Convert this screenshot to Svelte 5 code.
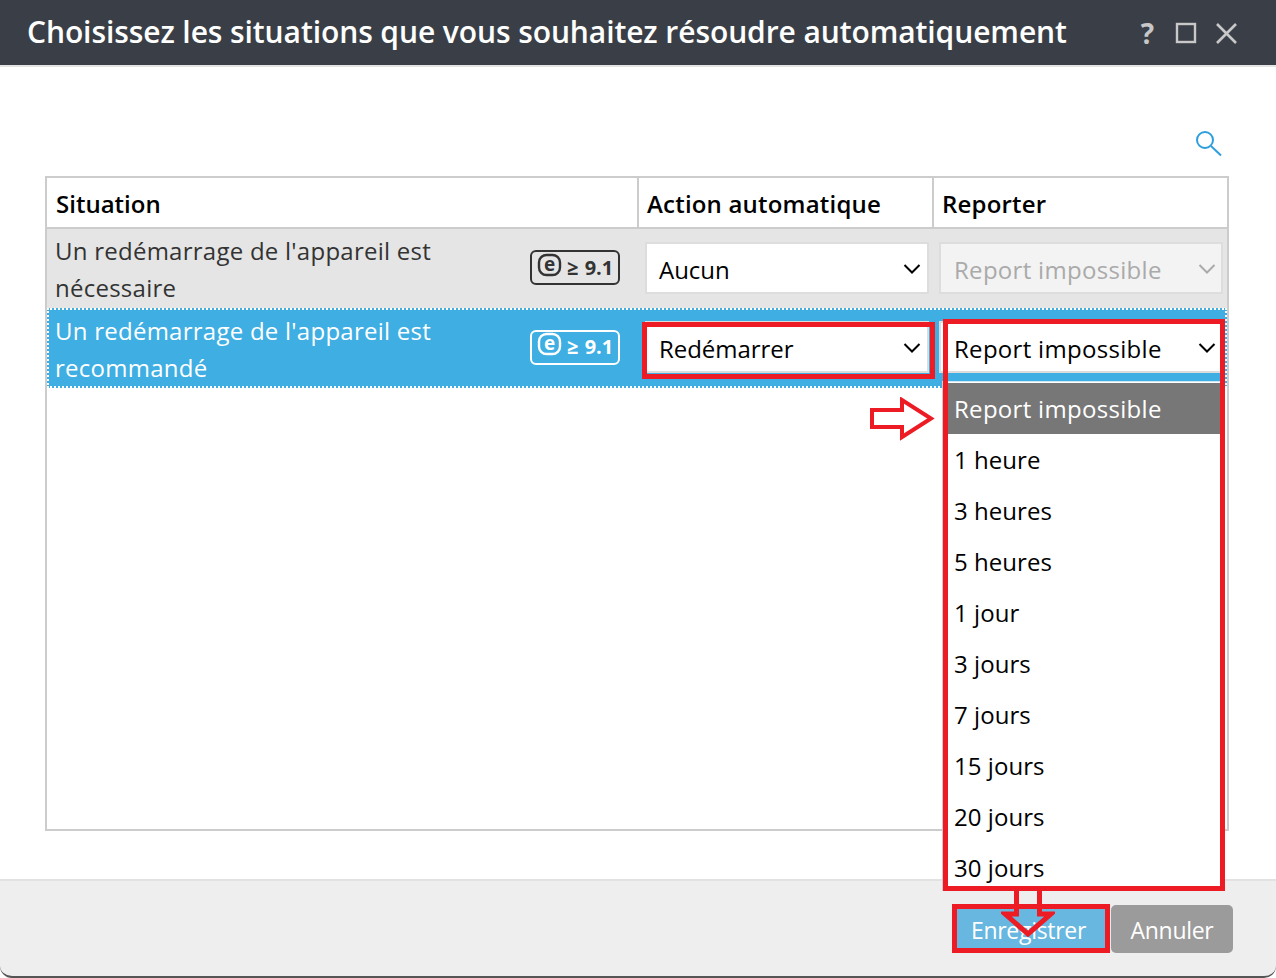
<script>
  const options = ['Report impossible','1 heure','3 heures','5 heures','1 jour','3 jours','7 jours','15 jours','20 jours','30 jours'];
</script>

{#snippet chevron()}
  <svg class="chev" width="18" height="12" viewBox="0 0 18 12"><path d="M1.5 2 L9 9.5 L16.5 2" fill="none" stroke="currentColor" stroke-width="2"/></svg>
{/snippet}

{#snippet badge()}
  <span class="badge">
    <svg width="26" height="24" viewBox="0 0 26 24"><rect x="2" y="2" width="21" height="20" rx="7.5" fill="none" stroke="currentColor" stroke-width="2.4"/><text x="12.5" y="18" text-anchor="middle" class="e">e</text></svg>
    <b>≥ 9.1</b>
  </span>
{/snippet}

<div class="dialog">
  <header class="titlebar">
    <h1>Choisissez les situations que vous souhaitez résoudre automatiquement</h1>
    <div class="tools">
      <span class="help">?</span>
      <svg width="22" height="22" viewBox="0 0 22 22"><rect x="2" y="2" width="18" height="18" fill="none" stroke="#c8c8c8" stroke-width="2.4"/></svg>
      <svg width="24" height="24" viewBox="0 0 24 24"><path d="M3 3 L22 22 M22 3 L3 22" fill="none" stroke="#c8c8c8" stroke-width="2.6"/></svg>
    </div>
  </header>

  <main class="body">
    <div class="searchline">
      <svg width="30" height="30" viewBox="0 0 30 30"><circle cx="12" cy="12" r="8" fill="none" stroke="#2f9fdc" stroke-width="2"/><path d="M18 18 L28 27.5" stroke="#2f9fdc" stroke-width="2" fill="none"/></svg>
    </div>
    <div class="table">
      <div class="row head">
        <div class="c1">Situation</div>
        <div class="c2">Action automatique</div>
        <div class="c3">Reporter</div>
      </div>
      <div class="row item grey">
        <div class="c1"><span class="name">Un redémarrage de l'appareil est nécessaire</span>{@render badge()}</div>
        <div class="c2"><div class="select">Aucun{@render chevron()}</div></div>
        <div class="c3"><div class="select off rp">Report impossible{@render chevron()}</div></div>
      </div>
      <div class="row item sel">
        <div class="c1"><span class="name">Un redémarrage de l'appareil est recommandé</span>{@render badge()}</div>
        <div class="c2"><div class="select">Redémarrer{@render chevron()}</div></div>
        <div class="c3"><div class="select rp">Report impossible{@render chevron()}</div></div>
      </div>
    </div>
  </main>

  <footer class="foot">
    <button class="save">Enregistrer</button>
    <button class="cancel">Annuler</button>
  </footer>

  <ul class="menu">
    {#each options as o, i}
      <li class:active={i === 0}>{o}</li>
    {/each}
  </ul>

  <div class="mark m1"></div>
  <div class="mark m2"></div>
  <div class="mark m3"></div>
  <svg class="arrow a1" width="66" height="44" viewBox="0 0 66 44"><path d="M3 13 H33 V3 L62 21.5 L33 40 V30 H3 Z" fill="#fff" stroke="#ed1c24" stroke-width="4"/></svg>
  <svg class="arrow a2" width="54" height="48" viewBox="0 0 54 48"><path d="M15.5 0 V25 H4 L27 45 L50 25 H38.5 V0" fill="none" stroke="#ed1c24" stroke-width="5"/></svg>
</div>

<style>
  :global(body) { margin: 0; background: #fff; }
  .dialog {
    position: relative; width: 1276px; height: 978px; overflow: hidden; box-sizing: border-box;
    display: flex; flex-direction: column; background: #fff;
    font-family: "Open Sans", "Noto Sans", sans-serif; font-size: 24px; color: #000;
  }
  .titlebar {
    height: 65px; flex: none; box-sizing: border-box; background: #3a3f47;
    display: flex; align-items: center; justify-content: space-between; padding: 0 38px 3px 27px;
    box-shadow: 0 2px 0 #e4e4e4;
  }
  h1 { margin: 0; font-size: 30px; font-weight: 600; color: #fff; letter-spacing: -0.09px; white-space: nowrap; }
  .tools { display: flex; align-items: center; gap: 17px; padding-top: 3px; }
  .help { font-size: 28px; font-weight: 700; color: #c8c8c8; margin-right: 4px; }
  .body { flex: 1; padding: 0 47px 48px 45px; display: flex; flex-direction: column; min-height: 0; }
  .searchline { height: 111px; flex: none; display: flex; justify-content: flex-end; align-items: flex-end; padding-right: 6px; padding-bottom: 18px; box-sizing: border-box; }
  .table { flex: 1; border: 2px solid #ccc; box-sizing: border-box; }
  .row { display: grid; grid-template-columns: 590px 295px 1fr; }
  .head { height: 51px; box-sizing: border-box; border-bottom: 2px solid #ccc; font-weight: 600; letter-spacing: 0.2px; }
  .head > div { padding: 2px 8px 0; display: flex; align-items: center; box-sizing: border-box; }
  .head .c1 { padding-left: 9px; letter-spacing: 0; }
  .head .c2, .head .c3 { border-left: 2px solid #ccc; }
  .item { height: 80px; box-sizing: border-box; line-height: 37px; }
  .item .c1 { display: flex; align-items: center; padding-left: 8px; padding-right: 17px; justify-content: space-between; }
  .name { width: 400px; letter-spacing: 0.25px; }
  .grey { background: #e5e5e5; color: #333; height: 79px; }
  .sel { background: #3eaee3; color: #fff; outline: 2px dotted #fff; outline-offset: -2px; }
  .sel .c1 { padding-top: 2px; }
  .item .c2 { padding: 13px 0 0 8px; }
  .item .c3 { padding: 13px 0 0 7px; }
  .select {
    height: 52px; box-sizing: border-box; border: 2px solid #ddd; background: #fff; color: #000;
    display: flex; align-items: center; justify-content: space-between; padding: 2px 6px 0 12px; letter-spacing: -0.05px;
    width: 284px;
  }
  .rp { letter-spacing: 0.3px; padding-left: 13px; padding-right: 5px; }
  .chev { margin-top: -1px; }
  .off { background: #f3f3f3; color: #aaa; }
  .badge {
    display: inline-flex; align-items: center; gap: 4px; box-sizing: border-box; width: 90px; height: 35px;
    border: 2px solid currentColor; border-radius: 6px; padding-left: 5px; margin-top: -2px; font-size: 20px; white-space: nowrap;
    flex: none; line-height: 1;
  }
  .sel .badge { margin-top: -4px; }
  .badge svg { margin-top: -6px; flex: none; overflow: visible; }
  .badge b { font-family: "Open Sans", sans-serif; font-weight: 700; word-spacing: 1px; }
  .e { font: 700 19px "Open Sans", sans-serif; fill: currentColor; }
  .foot {
    height: 99px; flex: none; box-sizing: border-box; background: #eee; border-top: 2px solid #e2e2e2; border-bottom: 2px solid #555;
    border-radius: 0 0 12px 12px; display: flex; justify-content: flex-end; align-items: flex-start; padding: 24px 43px 0 0; gap: 3px;
  }
  button { font: inherit; font-size: 23px; letter-spacing: -0.3px; color: #fff; border: 0; height: 48px; padding: 2px 0 0; border-radius: 5px; }
  .save { background: #68b7e0; width: 155px; padding-right: 4px; }
  .cancel { background: #9b9b9b; width: 122px; }
  .menu {
    position: absolute; left: 942px; top: 381px; width: 282px; height: 510px; box-sizing: border-box; margin: 0; padding: 1px 0 0;
    list-style: none; background: #fff; border: 1px solid #ccc; border-top-color: #cfe8f5;
  }
  .menu li { height: 51px; line-height: 51px; padding-left: 11px; letter-spacing: 0.05px; }
  .menu li.active { background: #777; color: #fff; letter-spacing: 0.3px; }
  .mark { position: absolute; box-sizing: border-box; border: 5px solid #ed1c24; }
  .m1 { left: 642px; top: 322px; width: 293px; height: 57px; }
  .m2 { left: 943px; top: 319px; width: 282px; height: 572px; }
  .m3 { left: 952px; top: 904px; width: 158px; height: 49px; }
  .arrow { position: absolute; }
  .a1 { left: 869px; top: 397px; }
  .a2 { left: 1001px; top: 889px; }
</style>
